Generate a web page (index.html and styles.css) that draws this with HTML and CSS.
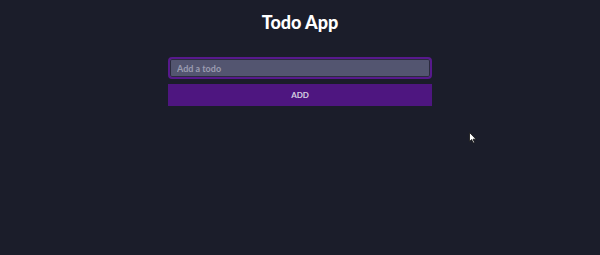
FILE: index.html
```html
<!DOCTYPE html>
<html lang="en">
  <head>
    <meta charset="UTF-8" />
    <meta name="viewport" content="width=device-width, initial-scale=1.0" />
    <title>Todo App</title>
    <link rel="stylesheet" href="styles.css">
  </head>
  <body>
    <div class="app">
      <h1>Todo App</h1>
      <form class="todo-form">
        <input type="text" class="todo-input" placeholder="Add a todo" />
        <button type="button" class="todo-add">ADD</button>
      </form>
    </div>
    <svg class="cursor" width="8" height="12" viewBox="0 0 8 12">
      <path d="M0.5 0.5 L0.5 9.5 L2.6 7.6 L4.2 11 L5.5 10.4 L4 7.2 L7 7.2 Z" fill="#fff" stroke="#111" stroke-width="0.8" />
    </svg>
  </body>
</html>
```

FILE: styles.css
```css
* {
  box-sizing: border-box;
  margin: 0;
  padding: 0;
}

body {
  font-family: Lato, "Noto Sans", sans-serif;
  background-color: #1b1d2a;
  height: 100vh;
  overflow: hidden;
}

.app {
  display: flex;
  flex-direction: column;
  align-items: center;
  padding-top: 11px;
}

.app h1 {
  font-size: 18px;
  font-weight: 900;
  color: #fff;
  line-height: 22px;
  margin-bottom: 24px;
}

.todo-form {
  width: 264px;
  display: flex;
  flex-direction: column;
  gap: 5px;
}

.todo-input {
  width: 100%;
  height: 22px;
  padding: 0 7px;
  background: #535570;
  border: 2px solid #57198c;
  box-shadow: inset 0 0 0 1px #2a2b3d;
  border-radius: 4px;
  font-family: Lato, sans-serif;
  font-size: 9px;
  font-weight: 700;
  color: #ddd;
  outline: none;
}

.todo-input::placeholder {
  color: #9b9cb0;
}

.todo-add {
  width: 100%;
  height: 22px;
  background: #4e1680;
  border: none;
  font-family: Lato, sans-serif;
  font-size: 8px;
  font-weight: 700;
  color: #d6cfe0;
  cursor: pointer;
}

.cursor {
  position: absolute;
  left: 469px;
  top: 132px;
}
```
